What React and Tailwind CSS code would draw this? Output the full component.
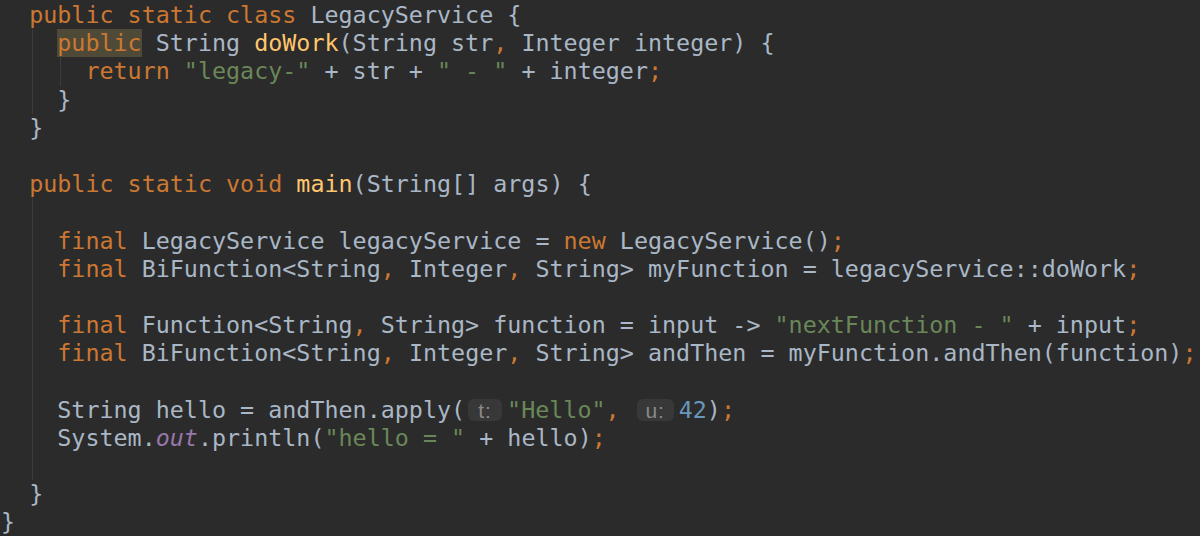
const lines = [
  { indent: 1, guides: [], tokens: [['k', 'public static class '], ['d', 'LegacyService {']] },
  {
    indent: 2,
    guides: [1],
    tokens: [['hl', 'public'], ['d', ' String '], ['m', 'doWork'], ['d', '(String str'], ['k', ','], ['d', ' Integer integer) {']],
  },
  {
    indent: 3,
    guides: [1, 2],
    tokens: [['k', 'return '], ['s', '"legacy-"'], ['d', ' + str + '], ['s', '" - "'], ['d', ' + integer'], ['k', ';']],
  },
  { indent: 2, guides: [1], tokens: [['d', '}']] },
  { indent: 1, guides: [], tokens: [['d', '}']] },
  { indent: 0, guides: [], tokens: [] },
  { indent: 1, guides: [], tokens: [['k', 'public static void '], ['m', 'main'], ['d', '(String[] args) {']] },
  { indent: 2, guides: [1], tokens: [] },
  {
    indent: 2,
    guides: [1],
    tokens: [['k', 'final '], ['d', 'LegacyService legacyService = '], ['k', 'new '], ['d', 'LegacyService()'], ['k', ';']],
  },
  {
    indent: 2,
    guides: [1],
    tokens: [
      ['k', 'final '], ['d', 'BiFunction<String'], ['k', ','], ['d', ' Integer'], ['k', ','],
      ['d', ' String> myFunction = legacyService::doWork'], ['k', ';'],
    ],
  },
  { indent: 2, guides: [1], tokens: [] },
  {
    indent: 2,
    guides: [1],
    tokens: [
      ['k', 'final '], ['d', 'Function<String'], ['k', ','], ['d', ' String> function = input -> '],
      ['s', '"nextFunction - "'], ['d', ' + input'], ['k', ';'],
    ],
  },
  {
    indent: 2,
    guides: [1],
    tokens: [
      ['k', 'final '], ['d', 'BiFunction<String'], ['k', ','], ['d', ' Integer'], ['k', ','],
      ['d', ' String> andThen = myFunction.andThen(function)'], ['k', ';'],
    ],
  },
  { indent: 2, guides: [1], tokens: [] },
  {
    indent: 2,
    guides: [1],
    tokens: [
      ['d', 'String hello = andThen.apply('], ['h', 't:'], ['s', '"Hello"'], ['k', ','], ['d', ' '],
      ['h', 'u:'], ['n', '42'], ['d', ')'], ['k', ';'],
    ],
  },
  {
    indent: 2,
    guides: [1],
    tokens: [['d', 'System.'], ['p', 'out'], ['d', '.println('], ['s', '"hello = "'], ['d', ' + hello)'], ['k', ';']],
  },
  { indent: 2, guides: [1], tokens: [] },
  { indent: 1, guides: [], tokens: [['d', '}']] },
  { indent: 0, guides: [], tokens: [['d', '}']] },
];

const tokenClass = {
  d: 'text-[#a9b7c6]',
  k: 'text-[#cc7832]',
  s: 'text-[#6a8759]',
  m: 'text-[#ffc66d]',
  n: 'text-[#6897bb]',
  p: 'text-[#9876aa] italic',
  hl: 'text-[#cc7832] bg-[#4e4a37]',
};

function Token({ type, text }) {
  if (type === 'h') {
    return (
      <span
        className={
          'inline-flex items-center justify-center align-middle h-[22px] rounded-[6px] bg-[#383838] text-[#8a8a8a] text-[21px] leading-none tracking-[1px] ml-[3px] mr-[5px] -translate-y-[1px] ' +
          (text === 't:' ? 'w-[34px]' : 'w-[37px]')
        }
        style={{ fontFamily: '"Liberation Sans", Arial, sans-serif' }}
      >
        {text}
      </span>
    );
  }
  return <span className={tokenClass[type]}>{text}</span>;
}

export default function App() {
  return (
    <div
      className="w-[1200px] h-[536px] overflow-hidden bg-[#2b2b2b] pt-[1px] pl-[1px] text-[23.36px]"
      style={{ fontFamily: '"DejaVu Sans Mono", "Liberation Mono", monospace' }}
    >
      {lines.map((line, i) => (
        <div key={i} className="flex h-[28.2px]">
          {Array.from({ length: line.indent }).map((_, j) => (
            <span key={j} className="w-[2ch] shrink-0 flex">
              {line.guides.includes(j) && <span className="ml-[3px] w-px bg-[#3c3c3c]" />}
            </span>
          ))}
          <span className="whitespace-pre leading-[28.2px]">
            {line.tokens.map(([type, text], k) => (
              <Token key={k} type={type} text={text} />
            ))}
          </span>
        </div>
      ))}
    </div>
  );
}
